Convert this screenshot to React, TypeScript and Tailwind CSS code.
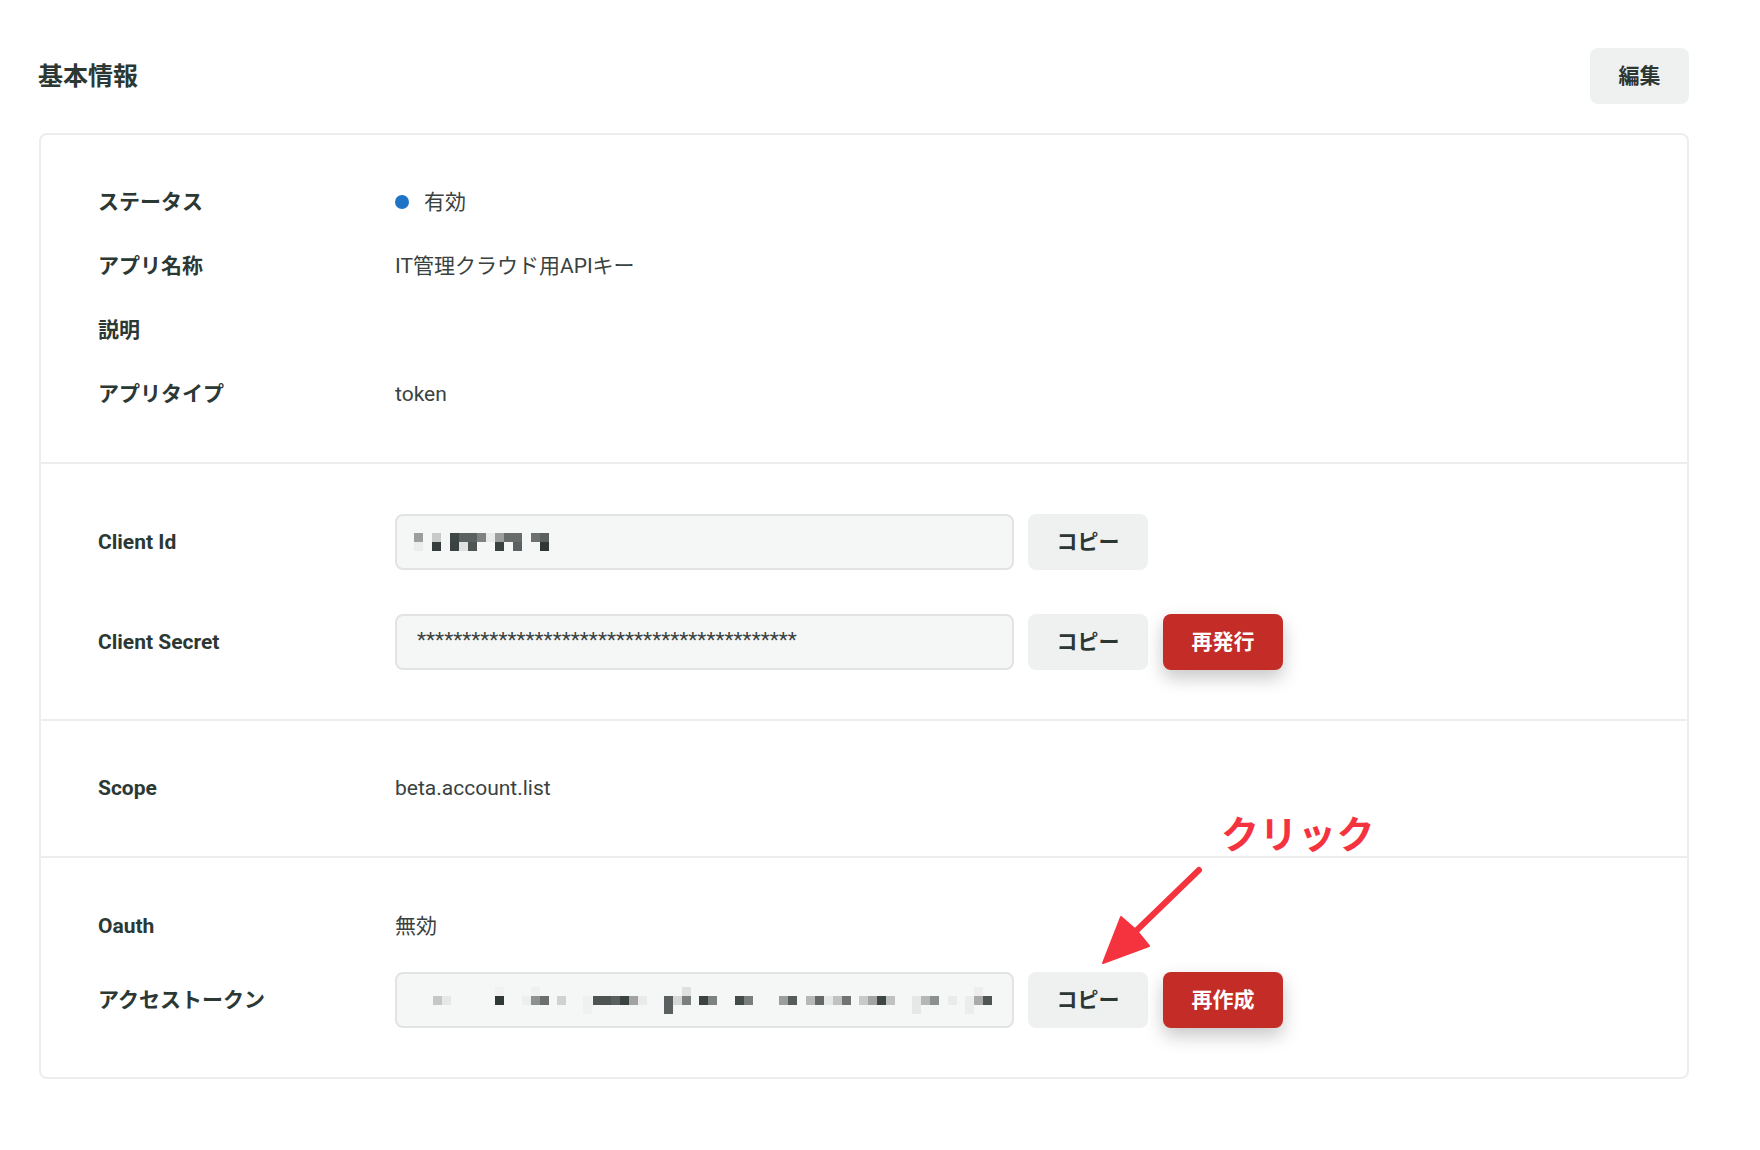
import type { ReactNode } from "react";

type Cell = [number, number, string];

// redacted client id, 9px blocks
const clientIdCells: Cell[] = [
  [0, 0, "#9b9e9d"], [2, 0, "#c8caca"], [4, 0, "#3e4745"], [5, 0, "#5b6160"],
  [6, 0, "#5b6160"], [7, 0, "#7e8281"], [8, 0, "#e9eaea"], [9, 0, "#9b9e9d"],
  [10, 0, "#676c6b"], [11, 0, "#676c6b"], [13, 0, "#6c7170"], [14, 0, "#5b6160"],
  [0, 1, "#ececec"], [2, 1, "#343d3b"], [4, 1, "#3a4341"], [5, 1, "#e0e1e1"],
  [6, 1, "#4e5553"], [9, 1, "#3a4240"], [11, 1, "#5b6160"], [14, 1, "#2f3836"],
];

// redacted access token, x in px from the input's left edge
const tokenCells: Cell[] = [
  [38, 1, "#c5c7c7"], [47, 1, "#e6e7e7"], [100, 0, "#f1f1f1"], [100, 1, "#2f3836"],
  [127, 1, "#eeeeee"], [136, 0, "#f0f0f0"], [136, 1, "#8d9190"], [145, 1, "#6b706f"],
  [162, 1, "#d0d2d2"], [188, 1, "#f0f0f0"], [188, 2, "#f0f0f0"], [198, 1, "#4d5452"],
  [207, 1, "#4d5452"], [216, 1, "#5a605f"], [225, 1, "#3a4341"], [234, 1, "#a0a3a2"],
  [243, 1, "#eaeaea"], [269, 1, "#5a605f"], [269, 2, "#5a605f"], [278, 1, "#d6d8d8"],
  [287, 0, "#e0e0e0"], [287, 1, "#7b7f7e"], [304, 1, "#3a4341"], [313, 1, "#7e8281"],
  [340, 1, "#444c4a"], [349, 1, "#7a7f7e"], [384, 1, "#9a9e9d"], [393, 1, "#555c5a"],
  [411, 1, "#b5b8b7"], [420, 1, "#646968"], [429, 1, "#e6e7e7"], [438, 1, "#c0c2c2"],
  [447, 1, "#6f7473"], [464, 1, "#c8caca"], [473, 1, "#a1a4a3"], [482, 1, "#3d4644"],
  [491, 1, "#c0c2c2"], [517, 1, "#e6e7e7"], [517, 2, "#e6e7e7"], [526, 1, "#b4b7b6"],
  [535, 1, "#8c908f"], [553, 1, "#eaeaea"], [570, 1, "#ececec"], [570, 2, "#ececec"],
  [579, 0, "#eeeeee"], [579, 1, "#a8abaa"], [588, 1, "#4e5553"],
];

function ClientIdMosaic() {
  return (
    <svg width="140" height="18" viewBox="0 0 140 18" className="block">
      {clientIdCells.map(([c, r, fill], i) => (
        <rect key={i} x={c * 9} y={r * 9} width="9" height="9" fill={fill} />
      ))}
    </svg>
  );
}

function TokenMosaic() {
  return (
    <svg width="600" height="27" viewBox="0 0 600 27" className="block">
      {tokenCells.map(([x, r, fill], i) => (
        <rect key={i} x={x - 2} y={r * 9} width="9" height="9" fill={fill} />
      ))}
    </svg>
  );
}

function Row({ label, children, className = "h-16" }: { label: string; children?: ReactNode; className?: string }) {
  return (
    <div className={`flex items-center ${className}`}>
      <div className="w-[297px] shrink-0 font-bold text-[#2c3834]">{label}</div>
      <div className="flex items-center text-[#39423f]">{children}</div>
    </div>
  );
}

function Field({ children, className = "" }: { children: ReactNode; className?: string }) {
  return (
    <div
      className={`flex h-14 w-[619px] items-center rounded-lg border-2 border-[#e2e4e4] bg-[#f5f6f6] text-[#3a4341] ${className}`}
    >
      {children}
    </div>
  );
}

function CopyButton() {
  return (
    <button className="ml-[14px] h-14 w-[120px] rounded-lg bg-[#eff1f1] font-bold text-[#2c3633]">
      コピー
    </button>
  );
}

function DangerButton({ children }: { children: ReactNode }) {
  return (
    <button className="ml-[15px] h-14 w-[120px] rounded-lg bg-[#c42c27] font-bold text-white shadow-[0_8px_18px_rgba(0,0,0,0.22)]">
      {children}
    </button>
  );
}

export default function App() {
  return (
    <div className="relative min-h-[1150px] w-[1760px] bg-white font-['Roboto','Noto_Sans_CJK_JP',sans-serif] text-[21px] leading-none">
      <div className="w-[1689px] pl-[39px] pt-12">
        <div className="flex h-14 items-center justify-between">
          <h2 className="-ml-px text-[25px] font-bold text-[#2c3834]">基本情報</h2>
          <button className="h-14 w-[99px] rounded-lg bg-[#eff1f1] font-bold text-[#2c3633]">編集</button>
        </div>

        <div className="mt-[29px] rounded-lg border-2 border-[#eceeee]">
          <div className="pl-[57px] pt-[35px] pb-[36px]">
            <Row label="ステータス">
              <span className="mr-[15px] h-[14px] w-[14px] rounded-full bg-[#1f73c7]" />
              有効
            </Row>
            <Row label="アプリ名称">IT管理クラウド用APIキー</Row>
            <Row label="説明" />
            <Row label="アプリタイプ">token</Row>
          </div>

          <div className="flex flex-col gap-[44px] border-t-2 border-[#eceeee] pl-[57px] pt-[50px] pb-[49px]">
            <Row label="Client Id" className="h-14">
              <Field className="pl-[17px]">
                <ClientIdMosaic />
              </Field>
              <CopyButton />
            </Row>
            <Row label="Client Secret" className="h-14">
              <Field className="pl-[20px]">
                <span className="-mt-[3px] text-[21px]">{"*".repeat(42)}</span>
              </Field>
              <CopyButton />
              <DangerButton>再発行</DangerButton>
            </Row>
          </div>

          <div className="border-t-2 border-[#eceeee] pl-[57px] pt-[49px] pb-[50px]">
            <Row label="Scope" className="h-9">beta.account.list</Row>
          </div>

          <div className="border-t-2 border-[#eceeee] pl-[57px] pt-[36px] pb-[49px]">
            <Row label="Oauth">無効</Row>
            <Row label="アクセストークン" className="mt-[14px] h-14">
              <Field>
                <TokenMosaic />
              </Field>
              <CopyButton />
              <DangerButton>再作成</DangerButton>
            </Row>
          </div>
        </div>
      </div>

      {/* callout pointing at the token copy button */}
      <span className="absolute left-[1221px] top-[816px] text-[38px] font-bold leading-none tracking-[0.5px] text-[#f5333f]">
        クリック
      </span>
      <svg className="pointer-events-none absolute left-0 top-0" width="1760" height="1150" viewBox="0 0 1760 1150">
        <line x1="1199" y1="870" x2="1137" y2="930" stroke="#f5333f" strokeWidth="6" strokeLinecap="round" />
        <polygon points="1103,963 1121,917 1136,930 1149,946" fill="#f5333f" stroke="#f5333f" strokeWidth="2" strokeLinejoin="round" />
      </svg>
    </div>
  );
}
